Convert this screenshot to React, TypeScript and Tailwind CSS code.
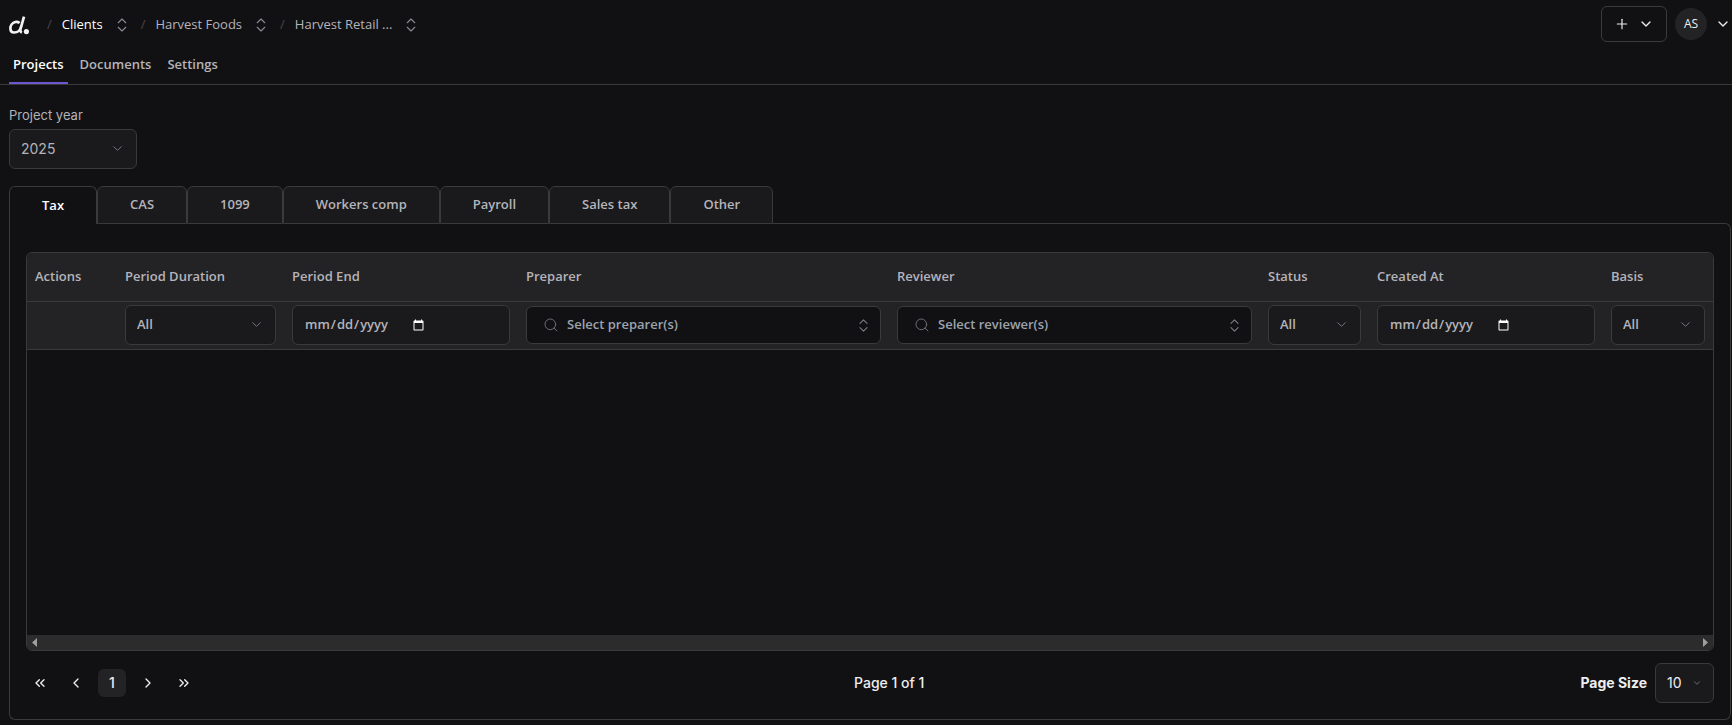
import { ReactNode, useState } from "react";
import {
  ChevronDown,
  ChevronLeft,
  ChevronRight,
  ChevronsLeft,
  ChevronsRight,
  ChevronsUpDown,
  Plus,
  Search,
} from "lucide-react";

const crumbs = ["Clients", "Harvest Foods", "Harvest Retail ..."];
const navItems = ["Projects", "Documents", "Settings"];
const tabs = ["Tax", "CAS", "1099", "Workers comp", "Payroll", "Sales tax", "Other"];

function Logo() {
  return (
    <svg width="21" height="19" viewBox="0 0 21 19" fill="none" aria-hidden="true">
      <path
        d="M11.6 7C10.4 6 8.9 5.7 7.3 6C4.6 6.6 2.4 9.3 2.4 12.3C2.4 14.9 3.9 16.5 6.2 16.5C9.4 16.5 12.2 14.2 13.1 11L16 0.6"
        stroke="#f2f1f4"
        strokeWidth="2.7"
      />
      <path d="M13.2 10L12.5 13C12.2 14.8 12.5 16 13.8 16.8" stroke="#f2f1f4" strokeWidth="2.4" />
      <circle cx="18.4" cy="15.6" r="2.6" fill="#f2f1f4" />
    </svg>
  );
}

function FilterSelect({ label, options }: { label: string; options: string[] }) {
  return (
    <div className="relative">
      <select
        aria-label={label}
        className="block h-10 w-full appearance-none rounded-md border border-[#3a3a3d] bg-[#1a1a1c] px-[11px] text-[13px] font-semibold text-[#b5b3ba] outline-none"
      >
        {options.map((option) => (
          <option key={option}>{option}</option>
        ))}
      </select>
      <ChevronDown
        size={15}
        strokeWidth={1.5}
        className="pointer-events-none absolute top-3 right-3 text-[#7c7a83]"
      />
    </div>
  );
}

function DateFilter({ label }: { label: string }) {
  return (
    <input
      type="date"
      aria-label={label}
      className="flex h-10 w-full items-center rounded-md border border-[#3a3a3d] bg-[#1a1a1c] px-[11px] text-[13px] font-semibold text-[#b5b3ba] outline-none [color-scheme:dark] [&::-webkit-calendar-picker-indicator]:ml-1 [&::-webkit-datetime-edit]:flex-none"
    />
  );
}

function PersonFilter({ label }: { label: string }) {
  return (
    <button
      type="button"
      className="flex h-[38px] w-full items-center rounded-md border border-[#3a3a3d] bg-[#111113] pr-2 pl-4 text-[13px] font-semibold text-[#9ca3af]"
    >
      <Search size={16} strokeWidth={1.5} className="mr-2 text-[#6f6d78]" />
      {label}
      <ChevronsUpDown size={17} strokeWidth={1.5} className="ml-auto text-[#7c7a83]" />
    </button>
  );
}

function PagerButton({ label, children }: { label: string; children: ReactNode }) {
  return (
    <button
      type="button"
      aria-label={label}
      className="flex size-7 items-center justify-center rounded-md text-[#eeeef0]"
    >
      {children}
    </button>
  );
}

const columns: { title: string; width: string; filter: ReactNode }[] = [
  { title: "Actions", width: "w-[90px]", filter: null },
  {
    title: "Period Duration",
    width: "w-[167px]",
    filter: <FilterSelect label="Period Duration" options={["All", "Annual", "Quarterly", "Monthly"]} />,
  },
  { title: "Period End", width: "w-[234px]", filter: <DateFilter label="Period End" /> },
  { title: "Preparer", width: "", filter: <PersonFilter label="Select preparer(s)" /> },
  { title: "Reviewer", width: "", filter: <PersonFilter label="Select reviewer(s)" /> },
  {
    title: "Status",
    width: "w-[109px]",
    filter: <FilterSelect label="Status" options={["All", "Open", "Closed"]} />,
  },
  { title: "Created At", width: "w-[234px]", filter: <DateFilter label="Created At" /> },
  {
    title: "Basis",
    width: "w-[110px]",
    filter: <FilterSelect label="Basis" options={["All", "Cash", "Accrual"]} />,
  },
];

export default function App() {
  const [activeTab, setActiveTab] = useState("Tax");

  return (
    <div className="min-h-screen bg-[#111113] font-['Open_Sans',sans-serif] text-[13px] text-[#b5b3ba]">
      <header className="border-b border-[#3a3a3d]">
        <div className="flex h-12 items-center justify-between pr-px pl-2">
          <div className="flex items-center pt-0.5">
            <a href="#" aria-label="Home" className="mr-[18px]">
              <Logo />
            </a>
            {crumbs.map((crumb, i) => (
              <div key={crumb} className="mr-1.5 flex items-center">
                <span className="mr-1.5 text-[#48474e]">/</span>
                <a href="#" className={i === 0 ? "px-1 text-white" : "px-1"}>
                  {crumb}
                </a>
                <button type="button" aria-label={`Switch ${crumb}`} className="ml-0.5 p-1 text-[#8b8992]">
                  <ChevronsUpDown size={18} strokeWidth={1.5} />
                </button>
              </div>
            ))}
          </div>
          <div className="flex items-center gap-2 text-[#eeeef0]">
            <button
              type="button"
              aria-label="Create"
              className="flex h-9 w-[66px] items-center justify-center gap-2 rounded-md border border-[#3a3a3d]"
            >
              <Plus size={16} strokeWidth={1.75} />
              <ChevronDown size={16} strokeWidth={2} />
            </button>
            <button type="button" className="flex items-center gap-2 text-xs">
              <span className="flex size-8 items-center justify-center rounded-full bg-[#232325]">AS</span>
              <ChevronDown size={16} strokeWidth={2} />
            </button>
          </div>
        </div>
        <nav className="flex h-9 pl-[9px] font-semibold">
          {navItems.map((item, i) => (
            <a
              key={item}
              href="#"
              className={
                i === 0
                  ? "mr-2 border-b-2 border-[#6e56cf] px-1 pt-[7px] text-white"
                  : "mr-2 border-b-2 border-transparent px-1 pt-[7px]"
              }
            >
              {item}
            </a>
          ))}
        </nav>
      </header>

      <main className="pt-5 pr-px pb-1 pl-[9px]">
        <label htmlFor="year" className="block font-['Inter',sans-serif] text-[13px] leading-5">
          Project year
        </label>
        <div className="relative mt-1 w-32">
          <select
            id="year"
            className="block h-10 w-full appearance-none rounded-md border border-[#3a3a3d] bg-[#1a1a1c] px-[11px] font-['Inter',sans-serif] text-sm outline-none"
          >
            <option>2025</option>
            <option>2024</option>
          </select>
          <ChevronDown
            size={15}
            strokeWidth={1.5}
            className="pointer-events-none absolute top-3 right-3 text-[#7c7a83]"
          />
        </div>

        <div role="tablist" className="mt-[17px] flex font-semibold">
          {tabs.map((tab) => (
            <button
              key={tab}
              type="button"
              role="tab"
              aria-selected={tab === activeTab}
              onClick={() => setActiveTab(tab)}
              className={
                tab === activeTab
                  ? "h-[38px] rounded-t-md border border-b-0 border-[#3a3a3d] bg-[#111113] px-8 text-white"
                  : "h-[38px] rounded-t-md border border-[#3a3a3d] bg-[#1a1a1c] px-8"
              }
            >
              {tab}
            </button>
          ))}
          <div className="-mb-[7px] h-2 flex-1 self-end rounded-tr-md border-t border-r border-[#3a3a3d]" />
        </div>

        <section className="rounded-b-md border-b border-l border-[#3a3a3d] pt-[7px]">
          <div className="rounded-br-md border-r border-[#3a3a3d] px-4 pt-[21px] pb-4">
            <div className="overflow-hidden rounded-md border border-[#3a3a3d]">
              <div className="h-[382px] overflow-hidden">
                <table className="w-full table-fixed border-collapse bg-[#232325] text-left">
                  <thead>
                    <tr className="h-12 border-b border-[#3a3a3d]">
                      {columns.map((column) => (
                        <th key={column.title} scope="col" className={`px-2 font-semibold ${column.width}`}>
                          {column.title}
                        </th>
                      ))}
                    </tr>
                  </thead>
                  <tbody>
                    <tr className="h-12 border-b border-[#3a3a3d]">
                      {columns.map((column) => (
                        <td key={column.title} className="px-2">
                          {column.filter}
                        </td>
                      ))}
                    </tr>
                  </tbody>
                </table>
              </div>
              <div className="flex h-[15px] items-center justify-between bg-[#2c2c2c] px-[5px] text-[#9f9f9f]">
                <svg width="5" height="9" viewBox="0 0 5 9" aria-hidden="true">
                  <path d="M5 0V9L0 4.5Z" fill="currentColor" />
                </svg>
                <svg width="5" height="9" viewBox="0 0 5 9" aria-hidden="true">
                  <path d="M0 0V9L5 4.5Z" fill="currentColor" />
                </svg>
              </div>
            </div>

            <div className="mt-3 flex items-center justify-between font-['Inter',sans-serif] text-sm text-[#eeeef0]">
              <div className="flex items-center gap-2">
                <PagerButton label="First page">
                  <ChevronsLeft size={16} />
                </PagerButton>
                <PagerButton label="Previous page">
                  <ChevronLeft size={16} />
                </PagerButton>
                <button type="button" className="size-7 rounded-md bg-[#232325] font-medium">
                  1
                </button>
                <PagerButton label="Next page">
                  <ChevronRight size={16} />
                </PagerButton>
                <PagerButton label="Last page">
                  <ChevronsRight size={16} />
                </PagerButton>
              </div>
              <p className="font-medium">Page 1 of 1</p>
              <div className="flex items-center gap-2">
                <label htmlFor="size" className="font-bold">
                  Page Size
                </label>
                <div className="relative">
                  <select
                    id="size"
                    className="block h-10 w-[59px] appearance-none rounded-md border border-[#3a3a3d] bg-[#1a1a1c] pl-[11px] text-sm outline-none"
                  >
                    <option>10</option>
                    <option>25</option>
                  </select>
                  <ChevronDown
                    size={10}
                    strokeWidth={2}
                    className="pointer-events-none absolute top-[15px] right-3 text-[#7c7a83]"
                  />
                </div>
              </div>
            </div>
          </div>
        </section>
      </main>
    </div>
  );
}
